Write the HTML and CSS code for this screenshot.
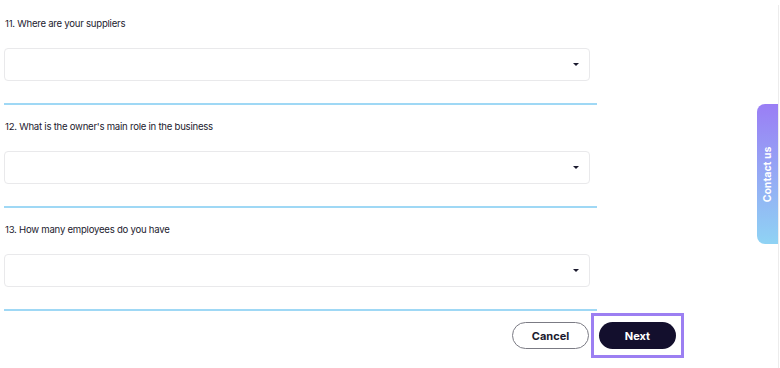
FILE: index.html
```html
<!DOCTYPE html>
<html lang="en">
<head>
    <meta charset="UTF-8">
    <meta name="viewport" content="width=device-width, initial-scale=1.0">
    <title>Business questionnaire</title>
    <link rel="stylesheet" href="styles.css">
</head>
<body>
    <div class="page">
        <form class="form">
            <div class="question">
                <label class="question-label">11. Where are your suppliers</label>
                <div class="select"><span class="caret"></span></div>
            </div>

            <div class="question">
                <label class="question-label">12. What is the owner's main role in the business</label>
                <div class="select"><span class="caret"></span></div>
            </div>

            <div class="question">
                <label class="question-label">13. How many employees do you have</label>
                <div class="select"><span class="caret"></span></div>
            </div>

            <div class="actions">
                <button type="button" class="btn btn-cancel">Cancel</button>
                <span class="focus-ring">
                    <button type="button" class="btn btn-next">Next</button>
                </span>
            </div>
        </form>
    </div>

    <div class="scroll-edge"></div>
    <a class="contact-tab" href="#"><span>Contact us</span></a>
</body>
</html>
```

FILE: styles.css
```css
:root {
    --text: #1b1a2e;
    --border: #e9e9eb;
    --divider: #9fd8f5;
    --navy: #130f2d;
    --focus: #9c7ff2;
}

body {
    font-family: Inter, 'Noto Sans', sans-serif;
    color: var(--text);
    background: #ffffff;
    margin: 0;
    padding: 2px 0 0 4px;
}

.page {
    width: 680px;
}

.form {
    width: 593px;
}

.question {
    padding: 15px 0 22px;
    border-bottom: 2px solid var(--divider);
}

.question-label {
    display: block;
    font-size: 9.6px;
    letter-spacing: -0.25px;
    line-height: 14px;
    padding-left: 1px;
    margin-bottom: 17px;
}

.select {
    height: 31px;
    margin-right: 7px;
    border: 1px solid var(--border);
    border-radius: 4px;
    display: flex;
    align-items: center;
    justify-content: flex-end;
    padding-right: 10px;
}

.caret {
    width: 0;
    height: 0;
    border-left: 3px solid transparent;
    border-right: 3px solid transparent;
    border-top: 3px solid var(--text);
}

.actions {
    width: 680px;
    display: flex;
    justify-content: flex-end;
    align-items: center;
    gap: 2px;
    margin-top: 2px;
}

.btn {
    font-family: Inter, 'Noto Sans', sans-serif;
    font-size: 11px;
    font-weight: 700;
    height: 27px;
    border-radius: 14px;
    cursor: pointer;
}

.btn-cancel {
    width: 77px;
    background: #ffffff;
    color: var(--text);
    border: 1px solid #7b7b84;
}

.btn-next {
    width: 77px;
    background: var(--navy);
    color: #ffffff;
    border: none;
    display: block;
}

.focus-ring {
    border: 3px solid var(--focus);
    padding: 6px 5px;
}

.scroll-edge {
    position: fixed;
    top: 5px;
    bottom: 0;
    right: 1px;
    width: 1px;
    background: #ececec;
}

.contact-tab {
    position: fixed;
    right: 2px;
    top: 104px;
    width: 21px;
    height: 140px;
    border-radius: 8px 0 0 8px;
    background: linear-gradient(180deg, #9a7ef5 0%, #8fd3f4 100%);
    display: flex;
    align-items: center;
    justify-content: center;
    text-decoration: none;
}

.contact-tab span {
    transform: rotate(-90deg);
    white-space: nowrap;
    color: #ffffff;
    font-size: 10.5px;
    font-weight: 700;
}
```
